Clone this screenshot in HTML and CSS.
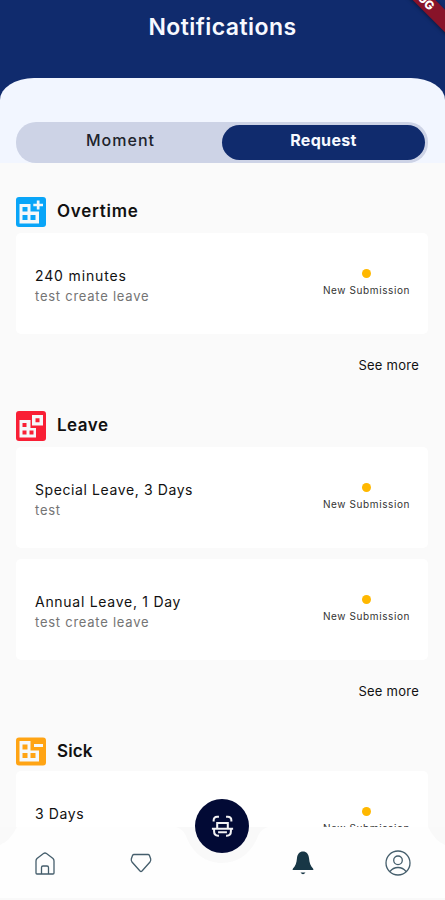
FILE: index.html
```html
<!DOCTYPE html>
<html lang="en">
<head>
<meta charset="utf-8">
<title>Notifications</title>
<link rel="stylesheet" href="styles.css">
</head>
<body>
<div class="app">
  <header class="header">
    <h1>Notifications</h1>
    <div class="debug">DEBUG</div>
  </header>
  <div class="sheet">
    <div class="tabs">
      <div class="tab tab-moment"><span>Moment</span></div>
      <div class="tab tab-request"><span>Request</span></div>
    </div>
  </div>
  <main class="content">
    <section>
      <h2><svg class="tile" viewBox="0 0 30 30"><rect width="30" height="30" rx="3" fill="#09a5f8"/><path class="windows" fill-rule="evenodd" d="M3.500 7h11v7.500h8.500v12h-19.500zM6.500 10v4.500h5v-4.500zM6.500 18v5h5v-5zM14.500 18v5h5v-5z"/><path class="windows" d="M20.800 3.500h2.700v3.200h3.500v2.600h-3.500v3.300h-2.700v-3.300h-3.500v-2.600h3.500z"/></svg><span class="name-overtime">Overtime</span></h2>
      <article class="card">
        <div class="detail"><p class="title t-minutes">240 minutes</p><p class="note">test create leave</p></div>
        <div class="status"><i></i><span>New Submission</span></div>
      </article>
      <p class="more"><span>See more</span></p>
    </section>
    <section>
      <h2><svg class="tile" viewBox="0 0 30 30"><rect width="30" height="30" rx="3" fill="#f91f35"/><path class="windows" fill-rule="evenodd" d="M3.500 9h11v8h5.500v9.500h-16.500zM6.500 12v4h4v-4zM6.500 19.500v4h4v-4zM13.500 19.500v4h4v-4zM16 4h11v10.500h-11zM19.500 7.300v4h4v-4z"/></svg><span class="name-leave">Leave</span></h2>
      <article class="card">
        <div class="detail"><p class="title t-special">Special Leave, 3 Days</p><p class="note n-test">test</p></div>
        <div class="status"><i></i><span>New Submission</span></div>
      </article>
      <article class="card">
        <div class="detail"><p class="title t-annual">Annual Leave, 1 Day</p><p class="note">test create leave</p></div>
        <div class="status"><i></i><span>New Submission</span></div>
      </article>
      <p class="more"><span>See more</span></p>
    </section>
    <section>
      <h2><svg class="tile" viewBox="0 0 30 30"><rect y=".5" width="30" height="28" rx="3" fill="#ffa414"/><path class="windows" fill-rule="evenodd" d="M3.500 4h11v9.500h8.500v11h-19.500zM6.500 7.500v5h5v-5zM6.500 16v5h5v-5zM14.500 16v5h5v-5zM18 7h9v3h-9z"/></svg><span class="name-sick">Sick</span></h2>
      <article class="card card-sick">
        <div class="detail"><p class="title t-days">3 Days</p></div>
        <div class="status"><i></i><span>New Submission</span></div>
      </article>
    </section>
  </main>
  <nav class="nav">
    <svg class="nav-shape" viewBox="0 0 445 73"><path d="M0 18Q10 14 17 0H176Q183 2 186 9C193 27 206 36 222 36S251 27 258 9Q261 2 268 0H428Q435 14 445 18V71H0Z" fill="#fefefe"/></svg>
    <svg class="icon" viewBox="0 0 26 28"><path d="M4 24V12Q4 10.500 5 9.500L11.500 4.500Q13 3.500 14.500 4.500L21 9.500Q22 10.500 22 12V24Q22 25 21 25H5Q4 25 4 24ZM9.500 25V18.500Q9.500 17 11 17H15Q16.500 17 16.500 18.500V25"/></svg>
    <svg class="icon" viewBox="0 0 26 28"><path d="M6 5.500H20Q21 5.500 21.500 6.500L22.700 10Q23 11.500 22 13L14 22Q13 23 12 22L4 13Q3 11.500 3.300 10L4.500 6.500Q5 5.500 6 5.500Z"/></svg>
    <div class="scan"><svg viewBox="0 0 26 26"><path d="M3 8V6.500Q3 2.500 7 2.500H9M17 2.500H19Q23 2.500 23 6.500V8M1 16H25M7 15V9.500H19V15M3.500 16V19Q3.500 24 8 24H9M22.500 16V19Q22.500 24 18 24H17M8 20H18"/></svg></div>
    <svg class="icon bell" viewBox="0 0 26 28"><path d="M13 2.500C9.500 2.500 7.500 5 7 9C6.500 14 5.500 17 3 19.500Q2 21 3 21H23Q24 21 23 19.500C20.500 17 19.500 14 19 9C18.500 5 16.500 2.500 13 2.500ZM10.500 23.500Q13 27 15.500 23.500Z"/></svg>
    <svg class="icon user" viewBox="0 0 26 28"><circle cx="13" cy="14" r="12"/><circle cx="13" cy="11.300" r="4.300"/><path d="M5 22.500Q8 18.500 13 18.500T21 22.500"/></svg>
  </nav>
</div>
</body>
</html>
```
FILE: styles.css
```css
* { box-sizing: border-box; }
body { margin: 0; font-family: Inter, sans-serif; color: #111; background: #fafafa; }
h1, h2, p { margin: 0; }
.app { position: relative; height: 900px; overflow: hidden; display: flex; flex-direction: column; background: #fafafa; }
.header { height: 100px; flex: none; background: #102b6d; text-align: center; padding-top: 11px; }
h1 { color: #f7f9ff; font-size: 23px; font-weight: 600; line-height: 32px; letter-spacing: .45px; }
.debug { position: absolute; right: -40px; top: -7px; width: 120px; height: 16px; padding-right: 21px; line-height: 16px; background: #881329; color: #fff; font-size: 12px; font-weight: 800; transform: rotate(45deg); box-shadow: 0 1px 4px #0006; }
.sheet { flex: none; margin-top: -22px; height: 85px; padding: 44px 17px 0 16px; background: #f2f6ff; border-radius: 34px 34px 0 0 / 22px 22px 0 0; }
.tabs { display: flex; height: 41px; padding: 3px; border-radius: 20px; background: #cdd3e6; }
.tab { flex: 1; height: 35px; border-radius: 18px; text-align: center; font-size: 16px; line-height: 31px; color: #20232c; font-weight: 500; }
.tab-moment span { letter-spacing: 1.05px; }
.tab-request { background: #102b6d; color: #f7f9ff; font-weight: 700; letter-spacing: .35px; }
.content { flex: none; height: 664px; overflow: hidden; padding: 34px 17px 0 16px; }
h2 { display: flex; gap: 11px; height: 30px; font-size: 17px; line-height: 29px; font-weight: 600; }
.name-overtime { letter-spacing: .75px; }
.name-leave { letter-spacing: .5px; }
.name-sick { letter-spacing: .1px; }
.tile { width: 30px; height: 30px; flex: none; }
.windows { fill: #f5f8fa; }
.card { display: flex; justify-content: space-between; height: 101px; margin-top: 6px; padding: 32px 18px 0 19px; border-radius: 5px; background: #fff; }
.card + .card { margin-top: 11px; }
.card-sick { margin-top: 4px; }
.title { font-size: 14px; line-height: 21px; letter-spacing: .6px; white-space: nowrap; }
.t-minutes { letter-spacing: .85px; }
.t-annual { letter-spacing: .72px; }
.note { font-size: 13px; line-height: 20px; color: #747474; letter-spacing: .75px; white-space: nowrap; }
.status { width: 87px; display: flex; flex-direction: column; align-items: center; padding-top: 4px; }
.status i { width: 9px; height: 9px; border-radius: 50%; background: #ffb800; }
.status span { margin-top: 5px; font-size: 10px; line-height: 14px; letter-spacing: .6px; white-space: nowrap; color: #333; }
.more { height: 77px; padding: 21px 9px 0 0; text-align: right; font-size: 13px; line-height: 20px; letter-spacing: .25px; }
.nav { position: relative; flex: none; height: 73px; display: grid; grid-template-columns: 90px 101px 62px 100px 92px; justify-items: center; align-items: start; padding-top: 22px; background: #f9f9f9; }
.nav-shape { position: absolute; left: 0; top: 0; width: 445px; height: 73px; }
.icon { position: relative; width: 26px; height: 28px; fill: none; stroke: #455e6c; stroke-width: 1.3; }
.bell { fill: #183746; stroke: none; }
.user { margin-right: 2px; }
.scan { position: relative; width: 54px; height: 54px; margin-top: -50px; border-radius: 50%; background: #020a35; display: flex; align-items: center; justify-content: center; }
.scan svg { width: 23px; height: 24px; fill: none; stroke: #f2f2f4; stroke-width: 2.3; }
```
